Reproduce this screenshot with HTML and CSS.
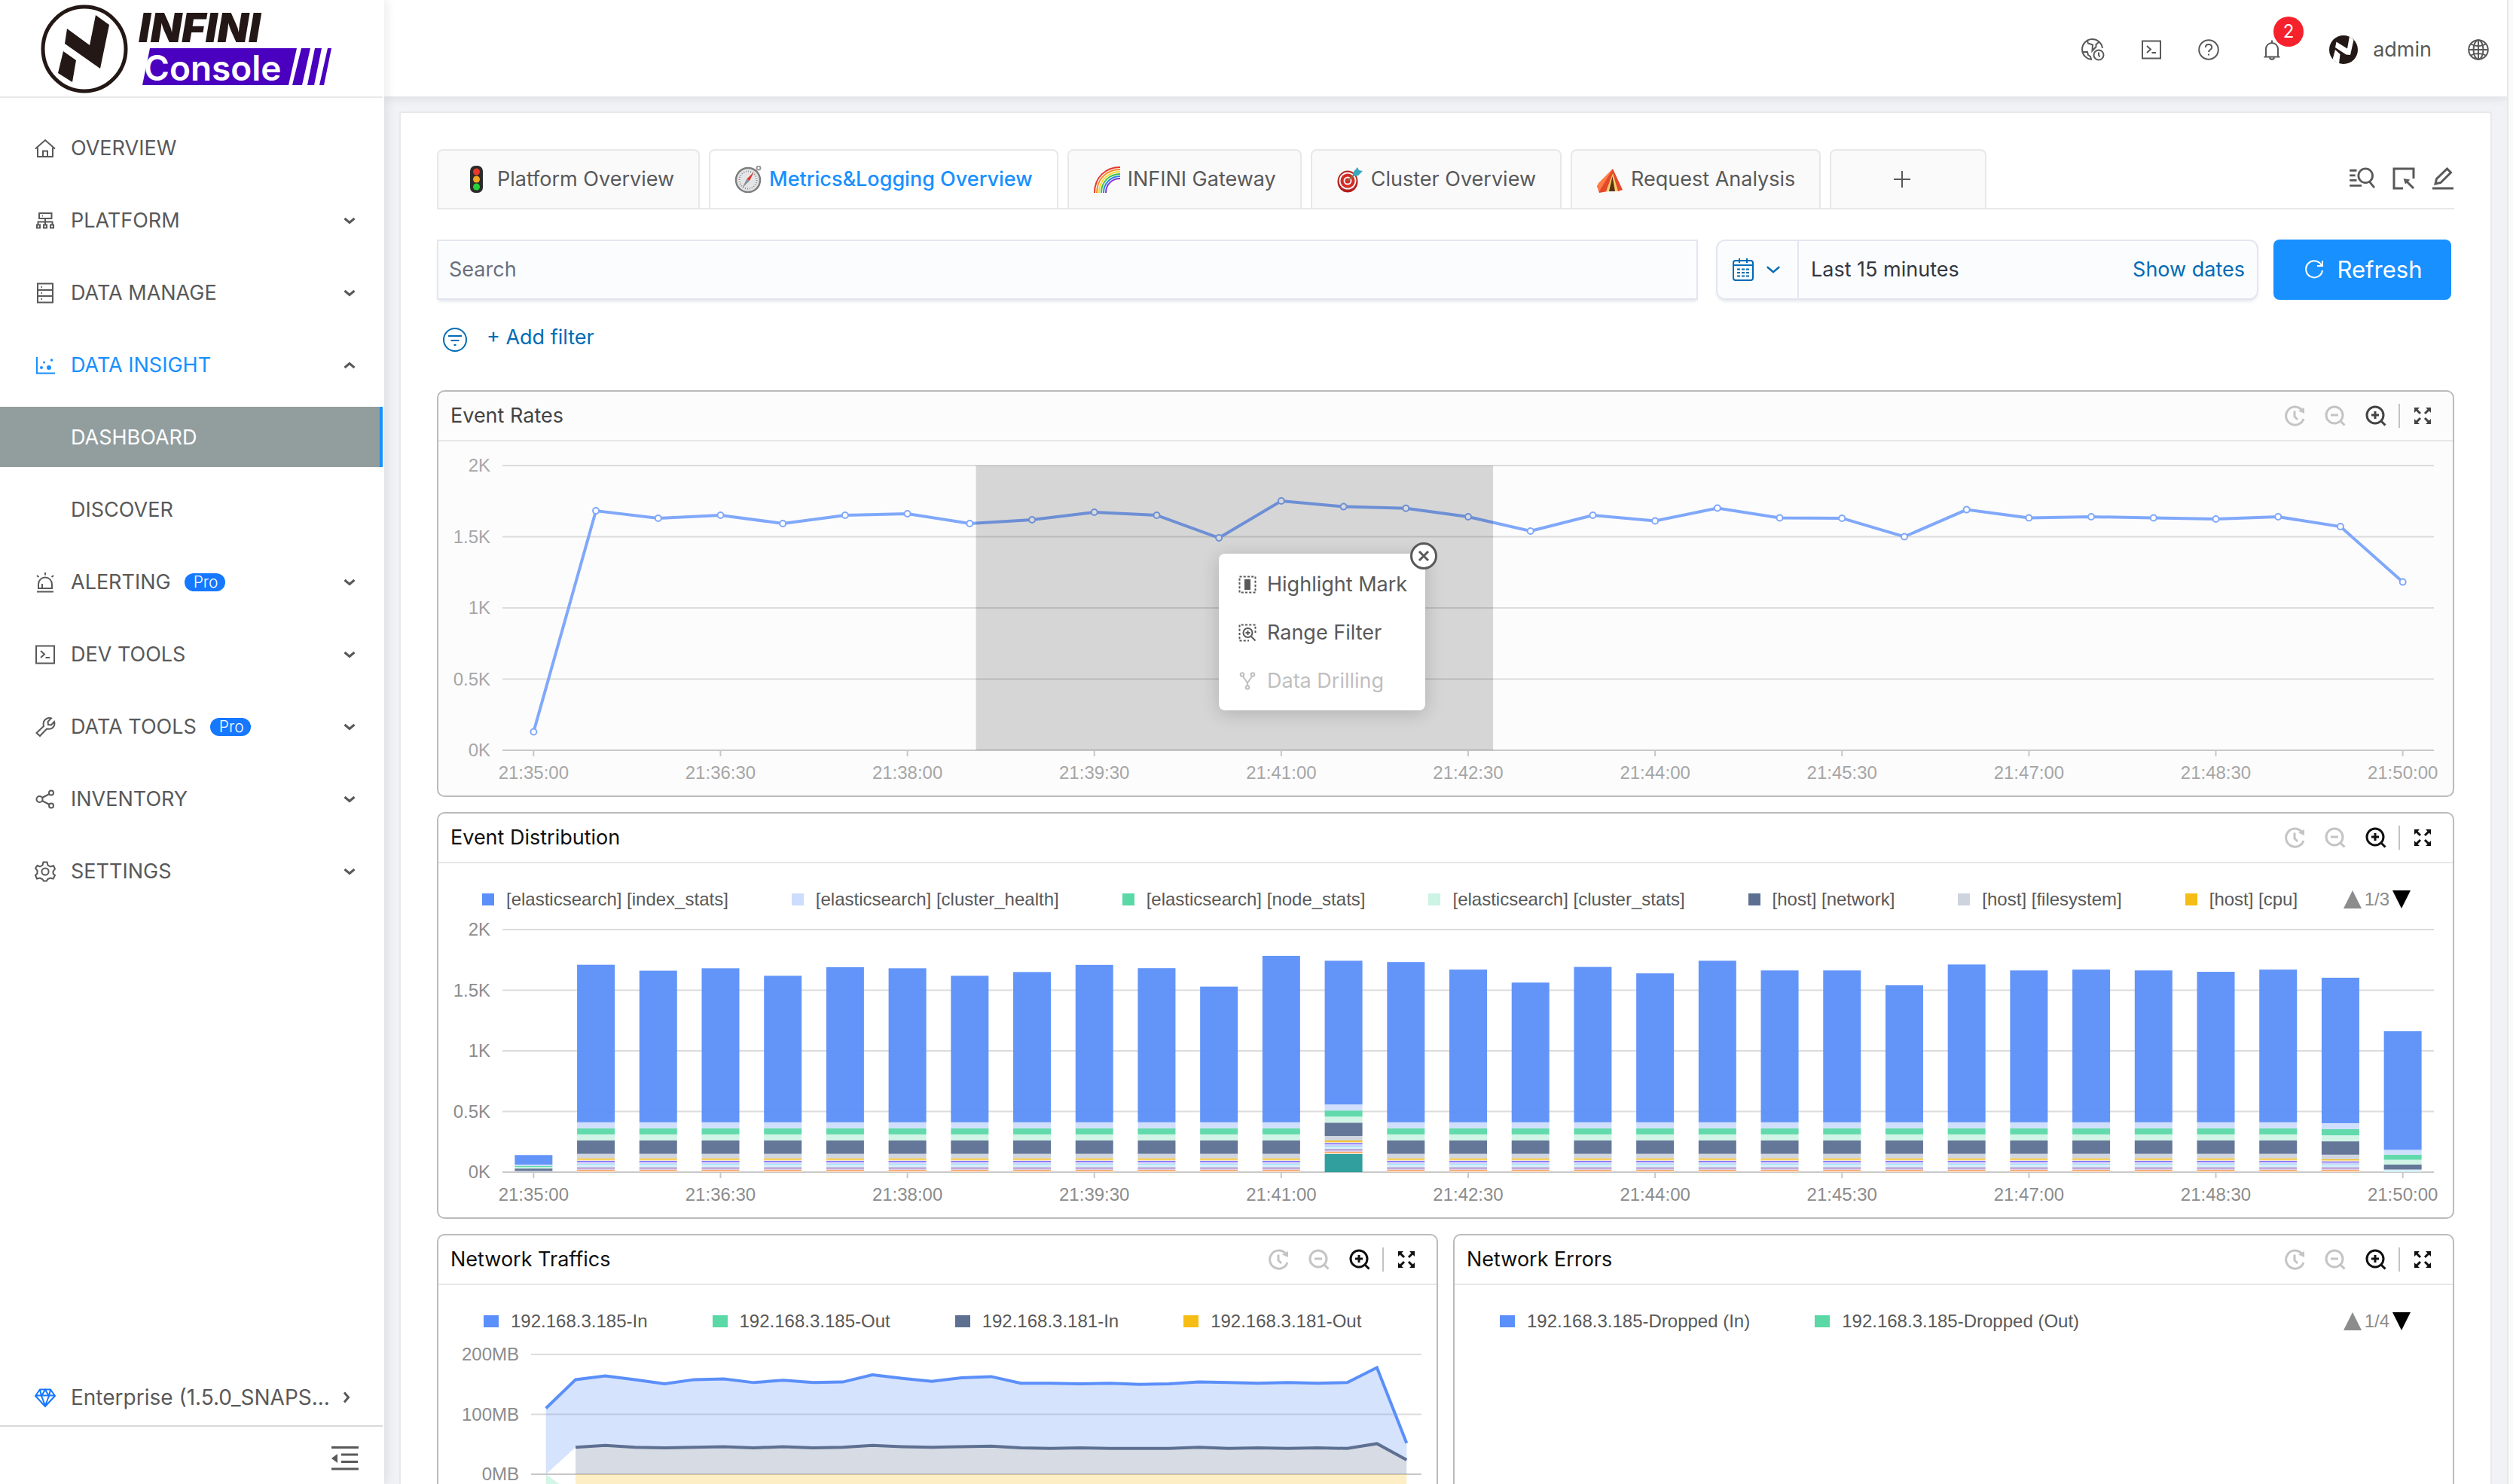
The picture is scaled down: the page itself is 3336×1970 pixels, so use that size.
FILE: index.html
```html
<!DOCTYPE html>
<html lang="en">
<head>
  <meta charset="UTF-8" />
  <meta name="viewport" content="width=device-width, initial-scale=1.0"/>
  <title>INFINI Console</title>
  <link rel="stylesheet" href="styles.css">
</head>
<body>
  <svg class="sprite" aria-hidden="true">
    <symbol id="i-home" viewBox="0 0 28 28"><path d="M1 14.500 14 3l13 11.500M4 13v12h20V13M11 25v-7.500h6V25"/></symbol>
    <symbol id="i-cluster" viewBox="0 0 28 28"><path d="M6 4h16.500v7H6zM14 11v8M4.500 19v-3.500h19V19M3 19.500h4v4H3zM12 19.500h4v4h-4zM21 19.500h4v4h-4zM10 7.500h1"/></symbol>
    <symbol id="i-db" viewBox="0 0 28 28"><path d="M4 1.500h20v25H4zM4 10h20M4 18h20M8.500 6h1.500M8.500 14h1.500M8.500 22h1.500"/></symbol>
    <symbol id="i-dots" viewBox="0 0 28 28"><path d="M3 3v21.500h24"/><g fill="currentColor" stroke="none"><circle cx="9" cy="17" r="2"/><circle cx="19" cy="17" r="3"/><circle cx="12.500" cy="10" r="1.500"/><circle cx="22.500" cy="7" r="1.800"/></g></symbol>
    <symbol id="i-alert" viewBox="0 0 28 28"><path d="M3 26.500h22M5 22v-5.500a9 9 0 0 1 18 0V22zM10 21.500V16M14 1v3.500M3 5l2.500 2M25 5l-2.500 2"/></symbol>
    <symbol id="i-code" viewBox="0 0 28 28"><path d="M2 2.500h24v23H2zM8 9l5 4.500L8 18M14.500 18H20"/></symbol>
    <symbol id="i-tool" viewBox="0 0 28 28"><path d="M2.500 22 12 13c-1-4 0-8 4-10 2.500-1.200 4.500-1 6-.500L17.500 7l.500 4 4 .500 4-4.500c1 3 0 6-2 8-2.500 2.500-5.500 2-8 1.500L7 26z"/></symbol>
    <symbol id="i-share" viewBox="0 0 28 28"><circle cx="6.500" cy="14" r="4"/><circle cx="22" cy="5.500" r="3"/><circle cx="22" cy="22.500" r="3"/><path d="m10 12 9.500-5M10 16l9.500 5"/></symbol>
    <symbol id="i-gear" viewBox="0 0 28 28"><circle cx="14" cy="14" r="4.600"/><path d="M11.500 1.500h5l1 4 3.500 2 4-1.200 2 4.200-2.600 3.500.300 3 2.300 2-2.500 4.500-4-1-3.500 1.800-1 2.200h-4l-1.500-2.200L7 22.500l-4 1L1 19l2.500-2.500v-4L1 9.500l2.500-3.500L7 7.500l3.500-2z"/></symbol>
    <symbol id="i-gem" viewBox="0 0 28 28"><path d="M7 3.500h14l6 8.500-13 14L1 12zM1.500 11.500h25M9 12l5 13 5-13M7 4l2 8 5-8 5 8 2-8"/></symbol>
    <symbol id="i-down" viewBox="0 0 16 16"><path d="m1.500 5 6.500 5.500L14.500 5"/></symbol>
    <symbol id="i-help" viewBox="0 0 28 28"><circle cx="14" cy="14" r="12.800"/><path d="M9.800 11c.200-5.500 8.400-5 8.400 0 0 3-4.200 3-4.200 6M14 19.500v2"/></symbol>
    <symbol id="i-bell" viewBox="0 0 28 28"><path d="M3.500 23.500h21M6 23.500V13a8 8 0 0 1 16 0v10.500M14 1.500V5M11 24.500c.500 3 5.500 3 6 0"/></symbol>
    <symbol id="i-globe" viewBox="0 0 28 28"><circle cx="14" cy="14" r="12.800"/><ellipse cx="14" cy="14" rx="6.500" ry="12.800"/><path d="M14 1v26M1 14h26M4 6.500c6 3.500 14 3.500 20 0M4 21.500c6-3.500 14-3.500 20 0"/></symbol>
    <symbol id="i-zone" viewBox="0 0 32 30"><path d="M29 13A13.500 13.500 0 1 0 15 28M9 3.500l1 3 6 2-.500 8 5-5.500v-3l5-4M3 18h6l1 4 3 2 1 4"/><circle cx="24" cy="22" r="6.500"/><path d="M24 18.500V22l1.500 2.500"/></symbol>
    <symbol id="i-n" viewBox="0 0 38 38"><circle cx="19" cy="19" r="19" fill="#231815"/><path d="M27 1 24 17.500 9.500 8.500 8 16l14.500 9.500L28 26 32.500 6zM8 19l-3.500 13 8.500 6 1.500-13z" fill="#fff"/></symbol>
    <symbol id="i-logsearch" viewBox="0 0 36 32"><path d="M0 4.500h10M0 11.500h8M0 18.500h10M0 26h17"/><circle cx="22.500" cy="12" r="10"/><path d="m28 20.500 7 8.500"/></symbol>
    <symbol id="i-select" viewBox="0 0 30 30"><path d="M28 15V2H2v26h12M17.500 17.500 28 28"/><path d="m14.500 15 9 1.500-6.500 6z" fill="currentColor" stroke="none"/></symbol>
    <symbol id="i-edit" viewBox="0 0 30 30"><path d="M1 28h28M5 22l1.500-6.500L20.500 2l5 5L12 20.500z"/></symbol>
    <symbol id="i-cal" viewBox="0 0 28 32"><rect x="1" y="4" width="26" height="26" rx="3"/><path d="M1 10h26M9 1v6M19 1v6"/><path stroke-dasharray="4 2" d="M6 15.500h16M6 20h16M6 24.500h16"/></symbol>
    <symbol id="i-filter" viewBox="0 0 32 32"><circle cx="16" cy="16" r="15"/><path d="M7 11h18M10.500 17h11M14.500 23h3"/></symbol>
    <symbol id="i-reload" viewBox="0 0 26 26"><path d="M23 7.500A11 11 0 1 0 24 14M24 1v7h-7"/></symbol>
    <symbol id="i-history" viewBox="0 0 28 28"><path d="M23.500 6A12 12 0 1 0 26 18M14 7.500V15l4 4"/><path d="M27 3v8l-8-3.500z" fill="currentColor" stroke="none"/></symbol>
    <symbol id="i-zoomout" viewBox="0 0 28 28"><circle cx="13" cy="13" r="11"/><path d="M8 13h10M21 21l5.500 5.500"/></symbol>
    <symbol id="i-zoomin" viewBox="0 0 28 28"><circle cx="13" cy="13" r="11"/><path d="M8 13h10M13 8v10M21 21l5.500 5.500"/></symbol>
    <symbol id="i-full" viewBox="0 0 24 24"><path d="m4 4 5 5M20 4l-5 5M4 20l5-5M20 20l-5-5"/><path fill="currentColor" stroke="none" d="M1 1h7L1 8zM23 1v7l-7-7zM1 23v-7l7 7zM23 23h-7l7-7z"/></symbol>
    <symbol id="i-mark" viewBox="0 0 24 24"><path stroke-dasharray="3 2.250" d="M1.500 1.500h21v21h-21z"/><path d="M8 5h8v14H8z" fill="currentColor" stroke="none"/></symbol>
    <symbol id="i-range" viewBox="0 0 24 24"><path stroke-dasharray="3 2.250" d="M22.500 12V1.500h-21v21H14"/><circle cx="12.500" cy="12" r="6"/><path d="M9.500 12h6M12.500 9v6M17 17l5.500 5.500"/></symbol>
    <symbol id="i-fork" viewBox="0 0 24 24"><circle cx="5" cy="3.500" r="2.300"/><circle cx="19" cy="3.500" r="2.300"/><circle cx="12" cy="20.500" r="2.300"/><path d="m6 6 6 8.500L18 6M12 14v4"/></symbol>
    <symbol id="i-fold" viewBox="0 0 36 32"><path d="M0 1.500h36M13 11h22M13 20.500h22M0 30h36"/><path fill="currentColor" stroke="none" d="M0 16 8 10v12z"/></symbol>
  </svg>

  <div class="app">
    <aside class="sidebar">
      <a class="logo" href="#" aria-label="INFINI Console">
        <svg viewBox="0 0 508 128" width="508" height="128">
          <ellipse cx="112" cy="65" rx="55" ry="56" fill="none" stroke="#231815" stroke-width="5"/>
          <path fill="#231815" d="m127 20 18 13-12 58-47-33 3-20 30 22zM84 68l17 12-5 29-19-12z"/>
          <path fill="#4a00bf" d="M199 64h195l-11 49H189zM400 64h12l-11 49h-13zM418 64h9l-10 49h-9zM435 64h5l-10 49h-6z"/>
          <text class="logo-name" x="184" y="56">INFINI</text>
          <text class="logo-product" x="191" y="107">Console</text>
        </svg>
      </a>
      <nav class="menu">
        <a href="#" class="menu-item"><svg class="icon"><use href="#i-home"/></svg>OVERVIEW</a>
        <a href="#" class="menu-item"><svg class="icon"><use href="#i-cluster"/></svg>PLATFORM<svg class="arrow"><use href="#i-down"/></svg></a>
        <a href="#" class="menu-item"><svg class="icon"><use href="#i-db"/></svg>DATA MANAGE<svg class="arrow"><use href="#i-down"/></svg></a>
        <a href="#" class="menu-item open"><svg class="icon"><use href="#i-dots"/></svg>DATA INSIGHT<svg class="arrow up"><use href="#i-down"/></svg></a>
        <a href="#" class="menu-item sub active">DASHBOARD</a>
        <a href="#" class="menu-item sub">DISCOVER</a>
        <a href="#" class="menu-item"><svg class="icon"><use href="#i-alert"/></svg>ALERTING<span class="pro">Pro</span><svg class="arrow"><use href="#i-down"/></svg></a>
        <a href="#" class="menu-item"><svg class="icon"><use href="#i-code"/></svg>DEV TOOLS<svg class="arrow"><use href="#i-down"/></svg></a>
        <a href="#" class="menu-item"><svg class="icon"><use href="#i-tool"/></svg>DATA TOOLS<span class="pro">Pro</span><svg class="arrow"><use href="#i-down"/></svg></a>
        <a href="#" class="menu-item"><svg class="icon"><use href="#i-share"/></svg>INVENTORY<svg class="arrow"><use href="#i-down"/></svg></a>
        <a href="#" class="menu-item"><svg class="icon"><use href="#i-gear"/></svg>SETTINGS<svg class="arrow"><use href="#i-down"/></svg></a>
      </nav>
      <a href="#" class="menu-item license"><svg class="icon"><use href="#i-gem"/></svg>Enterprise (1.5.0_SNAPS...<svg class="arrow right"><use href="#i-down"/></svg></a>
      <div class="fold">
        <button aria-label="Collapse menu"><svg><use href="#i-fold"/></svg></button>
      </div>
    </aside>

    <main class="main">
      <header class="header">
        <button class="header-btn" aria-label="Time zone"><svg class="icon zone"><use href="#i-zone"/></svg></button>
        <button class="header-btn" aria-label="Console"><svg class="icon"><use href="#i-code"/></svg></button>
        <button class="header-btn" aria-label="Help"><svg class="icon"><use href="#i-help"/></svg></button>
        <button class="header-btn bell" aria-label="Notifications"><svg class="icon"><use href="#i-bell"/></svg><span class="badge">2</span></button>
        <button class="header-btn user"><svg class="avatar"><use href="#i-n"/></svg>admin</button>
        <button class="header-btn" aria-label="Language"><svg class="icon"><use href="#i-globe"/></svg></button>
      </header>

      <section class="card">
        <div class="tabs">
          <button class="tab">
            <svg class="emoji" viewBox="0 0 36 36"><rect x="10" y="0" width="17" height="36" rx="7" fill="#2b2b2b"/><circle cx="18.500" cy="8" r="4.500" fill="#e8392c"/><circle cx="18.500" cy="18" r="4.500" fill="#f5a623"/><circle cx="18.500" cy="28" r="4.500" fill="#29d03a"/></svg>
            Platform Overview
          </button>
          <button class="tab active">
            <svg class="emoji" viewBox="0 0 36 36"><circle cx="32" cy="3" r="2.500" fill="none" stroke="#999"/><circle cx="18" cy="19" r="16" fill="#e4e6e8" stroke="#7d7d7d" stroke-width="2.500"/><circle cx="18" cy="19" r="11.500" fill="none" stroke="#8a8a8a" stroke-width="2" stroke-dasharray="1 2"/><path d="m26 8-6 12-4-2z" fill="#e0352b"/><path d="m10 30 6-12 4 2z" fill="#8d9296"/></svg>
            Metrics&amp;Logging Overview
          </button>
          <button class="tab">
            <svg class="emoji" viewBox="0 0 36 36" fill="none" stroke-width="3.500"><path stroke="#e8362d" d="M2 36C2 15 17 2 36 2"/><path stroke="#f78b22" d="M5 36C5 17 19 5 36 5"/><path stroke="#fbd72b" d="M8 36C8 19 21 8 36 8"/><path stroke="#3bc44d" d="M11 36c0-15 11-25 25-25"/><path stroke="#2a7fe8" d="M14 36c0-13 10-22 22-22"/><path stroke="#8236d8" d="M17 36c0-11 8-19 19-19"/></svg>
            INFINI Gateway
          </button>
          <button class="tab">
            <svg class="emoji" viewBox="0 0 36 36"><ellipse cx="15" cy="21" rx="13.500" ry="14.500" fill="#b3201c"/><circle cx="15" cy="20" r="11.500" fill="#f5f1f0"/><circle cx="15" cy="20" r="9.500" fill="#d42a25"/><circle cx="15" cy="20" r="5.500" fill="#f5f1f0"/><circle cx="15" cy="20" r="3.500" fill="#d42a25"/><path d="m15 20 12-11" stroke="#8f6b3d" stroke-width="2"/><path d="m22 9 6-7 2 4 5 1-6 6-6 1z" fill="#3aa9bd"/></svg>
            Cluster Overview
          </button>
          <button class="tab">
            <svg class="emoji" viewBox="0 0 36 36"><path d="m22 4 13 28-6 2H15L4 36l-3-9z" fill="#e5492b"/><path d="M22 4 3 23l-2 4 3 7z" fill="#ff7e45"/><path d="m22 10 7 24H13z" fill="#f5cf66"/><path d="m21.500 14 3.500 20h-8z" fill="#5a3218"/></svg>
            Request Analysis
          </button>
          <button class="tab add" aria-label="Add dashboard"><svg viewBox="0 0 24 24"><path d="M12 1v22M1 12h22"/></svg></button>
          <div class="tab-tools">
            <button aria-label="Log search"><svg class="wide"><use href="#i-logsearch"/></svg></button>
            <button aria-label="Select"><svg><use href="#i-select"/></svg></button>
            <button aria-label="Edit"><svg><use href="#i-edit"/></svg></button>
          </div>
        </div>

        <div class="query">
          <input type="text" class="search" placeholder="Search" aria-label="Search" />
          <div class="datepicker">
            <button class="quick" aria-label="Quick select"><svg class="cal"><use href="#i-cal"/></svg><svg class="caret"><use href="#i-down"/></svg></button>
            <button class="range">Last 15 minutes</button>
            <a href="#" class="dates">Show dates</a>
          </div>
          <button class="refresh"><svg><use href="#i-reload"/></svg>Refresh</button>
        </div>

        <div class="filters">
          <button aria-label="Filter options"><svg><use href="#i-filter"/></svg></button>
          <a href="#">+ Add filter</a>
        </div>

        <div class="grid">
          <article class="panel full dim">
            <div class="panel-head">
              <h2>Event Rates</h2>
              <div class="tools">
                <button disabled aria-label="History"><svg><use href="#i-history"/></svg></button>
                <button disabled aria-label="Zoom out"><svg><use href="#i-zoomout"/></svg></button>
                <button aria-label="Zoom in"><svg><use href="#i-zoomin"/></svg></button>
                <button class="fs" aria-label="Full screen"><svg><use href="#i-full"/></svg></button>
              </div>
            </div>
            <div class="chart" id="rates"></div>
            <div class="popup">
              <button class="close" aria-label="Close"><svg viewBox="0 0 16 16"><path d="m2 2 12 12M14 2 2 14"/></svg></button>
              <button><svg><use href="#i-mark"/></svg>Highlight Mark</button>
              <button><svg><use href="#i-range"/></svg>Range Filter</button>
              <button disabled><svg><use href="#i-fork"/></svg>Data Drilling</button>
            </div>
          </article>

          <article class="panel full">
            <div class="panel-head">
              <h2>Event Distribution</h2>
              <div class="tools">
                <button disabled aria-label="History"><svg><use href="#i-history"/></svg></button>
                <button disabled aria-label="Zoom out"><svg><use href="#i-zoomout"/></svg></button>
                <button aria-label="Zoom in"><svg><use href="#i-zoomin"/></svg></button>
                <button class="fs" aria-label="Full screen"><svg><use href="#i-full"/></svg></button>
              </div>
            </div>
            <div class="legend">
              <span class="key blue">[elasticsearch] [index_stats]</span>
              <span class="key lightblue">[elasticsearch] [cluster_health]</span>
              <span class="key green">[elasticsearch] [node_stats]</span>
              <span class="key lightgreen">[elasticsearch] [cluster_stats]</span>
              <span class="key navy">[host] [network]</span>
              <span class="key gray">[host] [filesystem]</span>
              <span class="key yellow">[host] [cpu]</span>
              <span class="pager"><i class="tri prev"></i>1/3<i class="tri next"></i></span>
            </div>
            <div class="chart" id="distribution"></div>
          </article>

          <article class="panel">
            <div class="panel-head">
              <h2>Network Traffics</h2>
              <div class="tools">
                <button disabled aria-label="History"><svg><use href="#i-history"/></svg></button>
                <button disabled aria-label="Zoom out"><svg><use href="#i-zoomout"/></svg></button>
                <button aria-label="Zoom in"><svg><use href="#i-zoomin"/></svg></button>
                <button class="fs" aria-label="Full screen"><svg><use href="#i-full"/></svg></button>
              </div>
            </div>
            <div class="legend lines">
              <span class="key blue">192.168.3.185-In</span>
              <span class="key green">192.168.3.185-Out</span>
              <span class="key navy">192.168.3.181-In</span>
              <span class="key yellow">192.168.3.181-Out</span>
            </div>
            <div class="chart" id="traffic"></div>
          </article>

          <article class="panel">
            <div class="panel-head">
              <h2>Network Errors</h2>
              <div class="tools">
                <button disabled aria-label="History"><svg><use href="#i-history"/></svg></button>
                <button disabled aria-label="Zoom out"><svg><use href="#i-zoomout"/></svg></button>
                <button aria-label="Zoom in"><svg><use href="#i-zoomin"/></svg></button>
                <button class="fs" aria-label="Full screen"><svg><use href="#i-full"/></svg></button>
              </div>
            </div>
            <div class="legend lines">
              <span class="key blue">192.168.3.185-Dropped (In)</span>
              <span class="key green">192.168.3.185-Dropped (Out)</span>
              <span class="pager"><i class="tri prev"></i>1/4<i class="tri next"></i></span>
            </div>
          </article>
        </div>
      </section>
    </main>
    <div class="scroll-track"></div>
  </div>

  <script src="charts.js"></script>
</body>
</html>
```
FILE: styles.css
```css
* {
  box-sizing: border-box;
}

body {
  margin: 0;
  font-family: Inter, 'Liberation Sans', sans-serif;
  font-size: 27px;
  line-height: 40px;
  color: #595959;
  background: #f0f2f5;
}

button {
  font: inherit;
  color: inherit;
  background: none;
  border: none;
  padding: 0;
  margin: 0;
  cursor: pointer;
}

a {
  color: inherit;
  text-decoration: none;
}

svg {
  display: block;
  fill: none;
  stroke: currentColor;
  stroke-width: 2;
  flex: none;
}

.sprite {
  position: absolute;
  width: 0;
  height: 0;
}

.app {
  display: flex;
  height: 100vh;
  overflow: hidden;
}

/* sidebar */
.sidebar {
  width: 510px;
  flex: none;
  display: flex;
  flex-direction: column;
  background: #fff;
  border-right: 2px solid #fff;
  box-shadow: 4px 0 12px rgba(0, 21, 41, 0.08);
  z-index: 1;
}

.logo {
  border-bottom: 2px solid #e8e8e8;
}

.logo svg {
  stroke: none;
}

.logo-name {
  font-size: 54px;
  font-weight: 900;
  font-style: italic;
  fill: #231815;
}

.logo-product {
  font-size: 46px;
  font-weight: 600;
  fill: #fff;
}

.menu {
  flex: 1;
  display: flex;
  flex-direction: column;
  gap: 16px;
  padding-top: 26px;
}

.menu-item {
  display: flex;
  align-items: center;
  height: 80px;
  padding: 1px 36px 0 46px;
}

.icon {
  width: 28px;
  height: 28px;
}

.menu-item .icon {
  margin-right: 20px;
}

.menu-item.sub {
  padding-left: 94px;
}

.menu-item.open {
  color: #1890ff;
}

.menu-item.active {
  color: #fff;
  background: #929d9e;
  border-right: 4px solid #1890ff;
}

.arrow {
  width: 16px;
  height: 16px;
  margin-left: auto;
  color: #595959;
  stroke-width: 3;
}

.arrow.up {
  transform: rotate(180deg);
}

.arrow.right {
  transform: rotate(-90deg);
}

.pro {
  margin-left: 18px;
  padding: 0 9px 0 12px;
  border-radius: 12px;
  background: #1677ff;
  color: #fff;
  font-size: 21px;
  font-weight: 300;
  line-height: 24px;
}

.license {
  padding: 4px 40px 0 46px;
  border-bottom: 2px solid #d9d9d9;
  font-size: 28px;
}

.license .icon {
  color: #1677ff;
}

.fold {
  display: flex;
  justify-content: flex-end;
  padding: 26px 32px 18px;
}

.fold svg {
  width: 36px;
  height: 32px;
  stroke-width: 3;
}

/* header */
.main {
  flex: 1;
  min-width: 0;
}

.header {
  display: flex;
  align-items: center;
  justify-content: flex-end;
  gap: 48px;
  height: 128px;
  padding: 4px 24px 0;
  background: #fff;
  box-shadow: 0 2px 12px rgba(0, 21, 41, 0.1);
}

.header-btn {
  position: relative;
}

.header-btn .zone {
  width: 32px;
  height: 30px;
}

.bell {
  margin: 0 14px 0 8px;
}

.badge {
  position: absolute;
  left: 16px;
  top: -30px;
  width: 40px;
  height: 40px;
  border-radius: 50%;
  background: #f5222d;
  color: #fff;
  font-size: 24px;
  text-align: center;
}

.user {
  display: flex;
  align-items: center;
  gap: 20px;
}

.avatar {
  width: 38px;
  height: 38px;
  stroke: none;
}

.scroll-track {
  width: 8px;
  background: #fafafa;
  border-left: 2px solid #e8e8e8;
}

/* card */
.card {
  margin: 20px;
  padding: 48px;
  background: #fff;
  border: 2px solid #e8e8e8;
  border-radius: 4px;
}

.tabs {
  display: flex;
  gap: 12px;
  height: 80px;
  border-bottom: 2px solid #e8e8e8;
}

.tab {
  display: flex;
  align-items: center;
  gap: 10px;
  padding: 0 32px;
  background: #fafafa;
  border: 2px solid #e8e8e8;
  border-bottom: none;
  border-radius: 8px 8px 0 0;
  white-space: nowrap;
}

.tab.active {
  background: #fff;
  color: #1890ff;
  font-weight: 500;
}

.tab .emoji {
  width: 36px;
  height: 36px;
  stroke: none;
}

.tab.add {
  width: 208px;
  padding-left: 82px;
}

.tab.add svg {
  width: 24px;
  height: 24px;
}

.tab-tools {
  display: flex;
  align-items: center;
  gap: 22px;
  margin-left: auto;
}

.tab-tools svg {
  width: 30px;
  height: 30px;
  stroke-width: 3;
}

.tab-tools svg.wide {
  width: 36px;
}

.query {
  display: flex;
  gap: 20px;
  height: 80px;
  margin-top: 40px;
  padding-right: 4px;
}

.search,
.datepicker {
  background: #fbfcfd;
  border: 2px solid #e3e6f0;
  box-shadow: 0 4px 4px -2px rgba(152, 162, 179, 0.3);
}

.search {
  flex: 1;
  min-width: 0;
  margin-right: 4px;
  padding: 0 14px;
  font: inherit;
  outline: none;
}

.search::placeholder {
  color: #69707d;
  opacity: 1;
}

.datepicker {
  display: flex;
  align-items: center;
  width: 720px;
  border-radius: 12px;
}

.quick {
  display: flex;
  align-items: center;
  gap: 16px;
  height: 76px;
  padding: 0 22px 0 20px;
  border-right: 2px solid #e3e6f0;
  color: #006bb4;
}

.cal {
  width: 28px;
  height: 32px;
}

.caret {
  width: 20px;
  height: 20px;
}

.range {
  flex: 1;
  padding-left: 16px;
  text-align: left;
  color: #343741;
}

.dates {
  padding-right: 16px;
  color: #006bb4;
}

.refresh {
  display: flex;
  align-items: center;
  justify-content: center;
  gap: 18px;
  width: 236px;
  padding-left: 2px;
  border-radius: 8px;
  background: #1890ff;
  color: #fff;
  font-size: 31px;
}

.refresh svg {
  width: 26px;
  height: 26px;
}

.filters {
  display: flex;
  align-items: center;
  gap: 26px;
  height: 100px;
  padding: 0 8px;
  color: #006bb4;
}

.filters button {
  padding-top: 6px;
}

.filters svg {
  width: 32px;
  height: 32px;
}

.grid {
  display: grid;
  grid-template-columns: 1fr 1fr;
  gap: 20px;
  margin-top: 20px;
}

/* panels */
.panel {
  position: relative;
  height: 540px;
  min-width: 0;
  border: 2px solid #bbb;
  border-radius: 10px;
  color: #101010;
}

.panel.full {
  grid-column: 1 / 3;
}

.panel.dim {
  background: #fcfcfc;
  color: #444;
}

.panel-head {
  display: flex;
  align-items: center;
  justify-content: space-between;
  height: 66px;
  padding: 0 28px 0 16px;
  border-bottom: 2px solid #e8e8e8;
}

.panel-head h2 {
  margin: 0;
  font-size: 27px;
  font-weight: 400;
}

.tools {
  display: flex;
  align-items: center;
  gap: 26px;
}

.tools svg {
  width: 28px;
  height: 28px;
  stroke-width: 3;
}

.tools button:disabled {
  color: #c4c4c4;
}

.tools .fs {
  margin-left: -10px;
  padding: 4px 0 4px 18px;
  border-left: 2px solid #c4c4c4;
}

.tools .fs svg {
  width: 24px;
  height: 24px;
}

.chart svg {
  stroke: none;
}

.chart text {
  font: 24px 'Liberation Sans', sans-serif;
  fill: #8c8c8c;
}

.dim .chart text {
  fill: #a6a6a6;
}

.legend {
  display: flex;
  height: 64px;
  padding: 32px 56px 0 58px;
  font: 24px/32px 'Liberation Sans', sans-serif;
  color: #595959;
  white-space: nowrap;
}

.legend.lines {
  padding-left: 60px;
}

.key {
  display: flex;
  align-items: center;
  gap: 16px;
}

.key + .key {
  margin-left: 84px;
}

.lines .key + .key {
  margin-left: 86px;
}

.key::before {
  content: '';
  width: 16px;
  height: 16px;
  background: var(--c);
}

.lines .key::before {
  width: 20px;
}

.blue { --c: #5b8ff9; }
.lightblue { --c: #cdddfd; }
.green { --c: #5ad8a6; }
.lightgreen { --c: #cdf3e4; }
.navy { --c: #5d7092; }
.gray { --c: #ced4de; }
.yellow { --c: #f6bd16; }

.pager {
  display: flex;
  align-items: center;
  gap: 4px;
  margin-left: auto;
  color: #8c8c8c;
}

.tri {
  border: 12px solid transparent;
}

.tri.prev {
  border-top: none;
  border-bottom: 24px solid #8c8c8c;
}

.tri.next {
  border-bottom: none;
  border-top: 24px solid #000;
}

/* brush menu over the selected range */
.popup {
  position: absolute;
  left: 1036px;
  top: 215px;
  width: 274px;
  padding: 9px 0 7px;
  background: #fff;
  border-radius: 8px;
  box-shadow: 0 4px 24px rgba(0, 0, 0, 0.18);
  color: #595959;
}

.popup button {
  display: flex;
  align-items: center;
  gap: 14px;
  width: 100%;
  height: 64px;
  padding-left: 26px;
}

.popup svg {
  width: 24px;
  height: 24px;
}

.popup button:disabled {
  color: #bfbfbf;
}

.popup .close {
  position: absolute;
  right: -16px;
  top: -15px;
  width: 36px;
  height: 36px;
  padding: 0;
  justify-content: center;
  border: 3px solid #595959;
  border-radius: 50%;
  background: #fff;
}

.close svg {
  width: 16px;
  height: 16px;
  stroke-width: 3;
}
```
FILE: charts.js
```js
const TIMES = ['21:35:00', '21:36:30', '21:38:00', '21:39:30', '21:41:00', '21:42:30', '21:44:00', '21:45:30', '21:47:00', '21:48:30', '21:50:00'];

const rates = [130, 1682, 1630, 1651, 1593, 1651, 1661, 1593, 1619, 1672, 1651, 1492, 1751, 1711, 1700, 1640,
  1540, 1651, 1611, 1701, 1632, 1630, 1500, 1690, 1632, 1640, 1632, 1624, 1640, 1571, 1182];

const totals = [141, 1710, 1661, 1681, 1619, 1690, 1681, 1619, 1650, 1709, 1682, 1530, 1783, 1743, 1732, 1670,
  1563, 1692, 1639, 1743, 1663, 1663, 1541, 1712, 1663, 1670, 1663, 1652, 1670, 1603, 1162];

// from the axis upwards
const COLORS = ['#269a99', '#ffe0c7', '#f6903d', '#decfea', '#9661bc', '#d3eef9', '#78d3f8', '#d3cefd', '#7262fd',
  '#fcebb9', '#f6bd16', '#ced4de', '#5d7092', '#cdf3e4', '#5ad8a6', '#cdddfd', '#5b8ff9'];
const usual = [0, 10, 8, 12, 9, 25, 6, 14, 10, 8, 12, 37, 110, 50, 50, 50];
const special = {
  0: [0, 0, 0, 0, 0, 0, 0, 0, 0, 0, 0, 10, 20, 12, 10, 10],
  13: [150, 10, 8, 12, 9, 22, 6, 14, 10, 8, 12, 37, 110, 50, 50, 50],
  29: [0, 10, 8, 12, 9, 20, 6, 14, 10, 8, 10, 37, 110, 50, 50, 50],
  30: [0, 0, 0, 0, 0, 18, 0, 0, 0, 0, 0, 4, 40, 40, 42, 40]
};

const in185 = [110, 158, 164, 158, 151, 158, 159, 153, 157, 153, 154, 166, 160, 155, 161, 163, 152, 152, 151, 152,
  150, 151, 154, 153, 152, 153, 152, 153, 178, 52];
const in181 = [0, 45, 48, 45, 44, 45, 46, 44, 46, 44, 45, 48, 46, 45, 46, 47, 44, 43, 44, 43, 43, 43, 45, 43, 44,
  43, 44, 43, 51, 24];

function axes(o) {
  let s = '';
  o.labels.forEach((label, i) => {
    const y = o.top + (o.bottom - o.top) * i / (o.labels.length - 1);
    const last = i === o.labels.length - 1;
    s += `<path d="M${o.left} ${y}H${o.right}" stroke="${last ? '#c8c8c8' : '#dcdcdc'}" stroke-width="2"/>`;
    s += `<text x="${o.left - 16}" y="${y + 8}" text-anchor="end">${label}</text>`;
  });
  return s;
}

function timeAxis(o, x) {
  return TIMES.map((t, i) => {
    const px = x(i * 3);
    return `<path d="M${px} ${o.bottom}v8" stroke="#c8c8c8" stroke-width="2"/>` +
      `<text x="${px}" y="${o.bottom + 38}" text-anchor="middle">${t}</text>`;
  }).join('');
}

function scales(o, n, max) {
  const band = (o.right - o.left) / n;
  return {
    band,
    x: i => o.left + band * (i + 0.5),
    y: v => o.bottom - v / max * (o.bottom - o.top)
  };
}

function mount(id, height, draw) {
  const el = document.getElementById(id);
  const w = el.clientWidth;
  el.innerHTML = `<svg width="${w}" height="${height}">${draw(w)}</svg>`;
}

function drawRates(w) {
  const o = { left: 85, right: w - 25, top: 32, bottom: 410, labels: ['2K', '1.5K', '1K', '0.5K', '0K'] };
  const { x, y, band } = scales(o, rates.length, 2000);
  const pts = rates.map((v, i) => [x(i), y(v)]);
  const from = o.left + band * 7.6;
  const to = o.left + band * 15.9;
  return axes(o) + timeAxis(o, x) +
    `<polyline points="${pts.join(' ')}" fill="none" stroke="#80a8fb" stroke-width="4"/>` +
    pts.map(p => `<circle cx="${p[0]}" cy="${p[1]}" r="4" fill="#fff" stroke="#80a8fb" stroke-width="2"/>`).join('') +
    `<rect x="${from}" y="${o.top}" width="${to - from}" height="${o.bottom - o.top}" fill="#000" fill-opacity="0.15"/>`;
}

function drawDistribution(w) {
  const o = { left: 85, right: w - 25, top: 24, bottom: 346, labels: ['2K', '1.5K', '1K', '0.5K', '0K'] };
  const { x, y } = scales(o, totals.length, 2000);
  let s = axes(o) + timeAxis(o, x);
  totals.forEach((total, i) => {
    let base = 0;
    const parts = special[i] || usual;
    const rest = total - parts.reduce((a, b) => a + b, 0);
    [...parts, rest].forEach((v, k) => {
      if (!v) return;
      s += `<rect x="${x(i) - 25}" y="${y(base + v)}" width="50" height="${y(base) - y(base + v)}" fill="${COLORS[k]}" fill-opacity="0.95"/>`;
      base += v;
    });
  });
  return s;
}

function drawTraffic(w) {
  const o = { left: 123, right: w - 20, top: 28, bottom: 187, labels: ['200MB', '100MB', '0MB'] };
  const { x, y } = scales(o, in185.length, 200);
  const a = in185.map((v, i) => [x(i), y(v)]);
  const b = in181.map((v, i) => [x(i), y(v)]);
  const end = x(in185.length - 1);
  return axes(o) +
    `<polygon points="${a.join(' ')} ${[...b].reverse().join(' ')}" fill="#5b8ff9" fill-opacity="0.25"/>` +
    `<polygon points="${b.slice(1).join(' ')} ${end},${y(0)} ${x(1)},${y(0)}" fill="#5d7092" fill-opacity="0.25"/>` +
    `<polygon points="${x(1)},${y(0)} ${end},${y(0)} ${end},${y(-30)} ${x(1)},${y(-36)}" fill="#f6bd16" fill-opacity="0.25"/>` +
    `<polygon points="${x(0)},${y(0)} ${x(1)},${y(-36)} ${x(1)},${y(-110)} ${x(0)},${y(-90)}" fill="#5ad8a6" fill-opacity="0.25"/>` +
    `<polyline points="${a.join(' ')}" fill="none" stroke="#5b8ff9" stroke-width="4"/>` +
    `<polyline points="${b.slice(1).join(' ')}" fill="none" stroke="#5d7092" stroke-width="4"/>`;
}

function render() {
  mount('rates', 470, drawRates);
  mount('distribution', 406, drawDistribution);
  mount('traffic', 400, drawTraffic);
}

render();
window.addEventListener('resize', render);
```
